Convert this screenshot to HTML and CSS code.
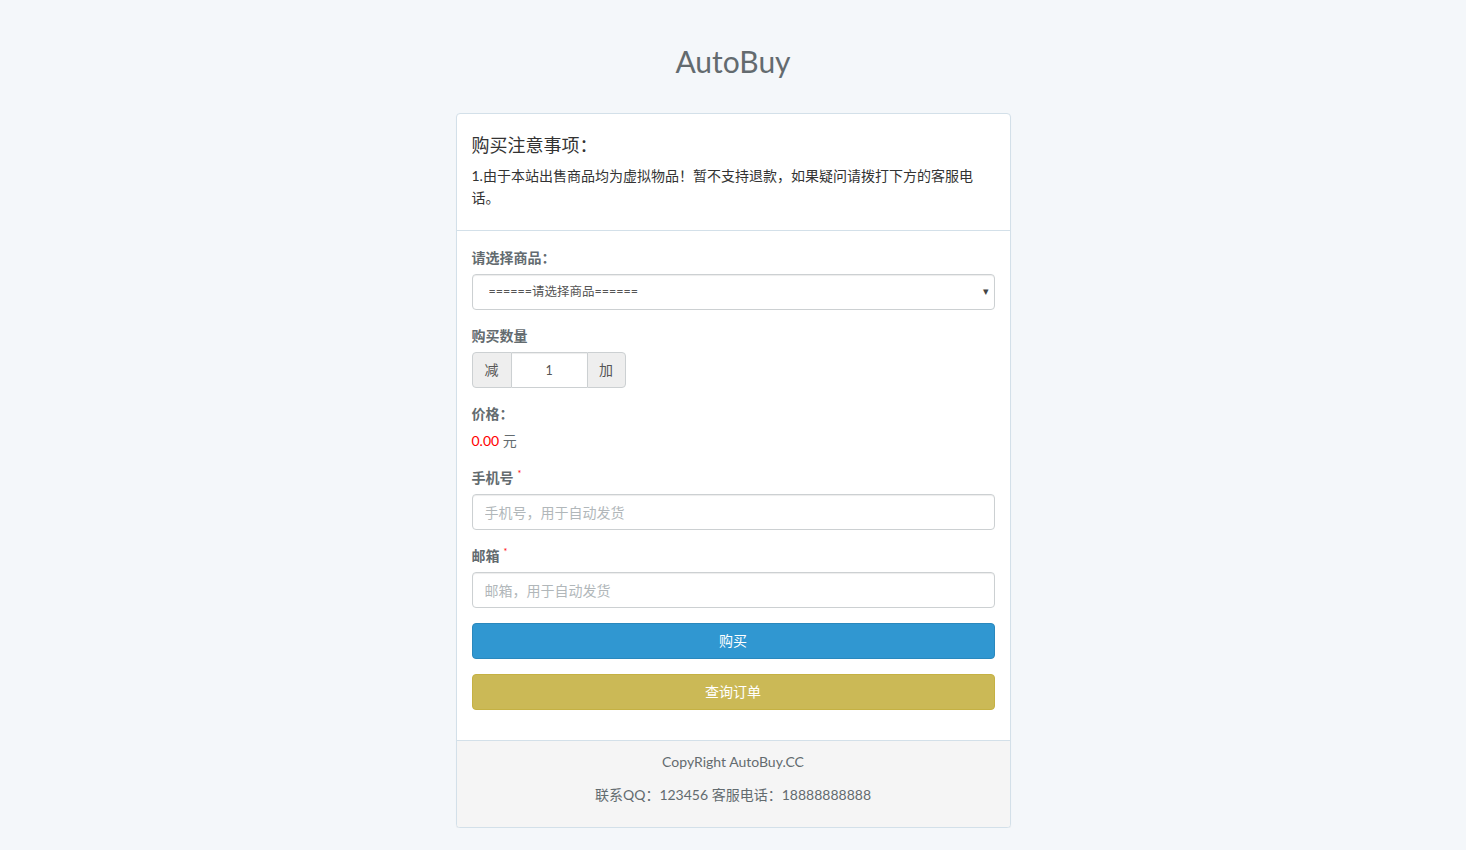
FILE: index.html
```html
<!DOCTYPE html>
<html lang="zh-CN">
<head>
<meta charset="utf-8">
<title>AutoBuy</title>
<link rel="stylesheet" href="styles.css">
</head>
<body>
<header class="site-header">
  <h1 class="site-title">AutoBuy</h1>
</header>
<main class="panel">
  <section class="notice">
    <h4 class="notice-title">购买注意事项：</h4>
    <p class="notice-text">1.由于本站出售商品均为虚拟物品！暂不支持退款，如果疑问请拨打下方的客服电话。</p>
  </section>
  <form class="panel-body">
    <div class="form-group">
      <label class="label">请选择商品：</label>
      <div class="select-wrap">
        <select class="form-control select">
          <option>======请选择商品======</option>
        </select>
        <span class="caret">&#9662;</span>
      </div>
    </div>
    <div class="form-group">
      <label class="label">购买数量</label>
      <div class="input-group">
        <span class="addon addon-left">减</span>
        <input class="qty" type="text" value="1">
        <span class="addon addon-right">加</span>
      </div>
    </div>
    <div class="form-group">
      <label class="label">价格：</label>
      <div class="price"><span class="price-num">0.00</span> 元</div>
    </div>
    <div class="form-group">
      <label class="label">手机号<sup class="req">*</sup></label>
      <input class="form-control" type="text" placeholder="手机号，用于自动发货">
    </div>
    <div class="form-group">
      <label class="label">邮箱<sup class="req">*</sup></label>
      <input class="form-control" type="text" placeholder="邮箱，用于自动发货">
    </div>
    <div class="form-group">
      <button type="button" class="btn btn-primary">购买</button>
    </div>
    <div class="form-group">
      <button type="button" class="btn btn-warning">查询订单</button>
    </div>
  </form>
  <footer class="panel-footer">
    <p>CopyRight AutoBuy.CC</p>
    <p>联系QQ：123456 客服电话：18888888888</p>
  </footer>
</main>
</body>
</html>
```
FILE: styles.css
```css
* { box-sizing: border-box; }
html, body { margin: 0; padding: 0; }
body {
  background: #f4f7fa;
  font-family: Lato, "Noto Sans CJK SC", sans-serif;
  font-size: 14px;
  line-height: 1.6;
  color: #636b6f;
}
.site-header {
  padding: 44px 0 35px;
  text-align: center;
}
.site-title {
  margin: 0;
  font-size: 30px;
  font-weight: 400;
  line-height: 34px;
  color: #636b6f;
}
.panel {
  width: 555px;
  margin: 0 auto;
  background: #fff;
  border: 1px solid #d3e0e9;
  border-radius: 4px;
  box-shadow: 0 1px 1px rgba(0,0,0,.05);
  overflow: hidden;
}
.notice {
  padding: 21px 15px 21px;
  border-bottom: 1px solid #d3e0e9;
}
.notice-title {
  margin: 0 0 10px;
  font-size: 18px;
  font-weight: 400;
  line-height: 20px;
  color: #333;
}
.notice-text {
  margin: 0;
  max-width: 505px;
  line-height: 22px;
  color: #333;
}
.panel-body {
  padding: 16px 15px 0;
}
.form-group {
  margin-bottom: 15px;
}
.label {
  display: block;
  margin-bottom: 5px;
  font-weight: 700;
  line-height: 22px;
  color: #636b6f;
}
.req {
  color: #f00;
  font-size: 9px;
  font-weight: 400;
  margin-left: 4px;
  vertical-align: 6px;
  line-height: 0;
}
.form-control {
  display: block;
  width: 100%;
  height: 36px;
  padding: 6px 12px;
  font: inherit;
  font-size: 14px;
  color: #555;
  background: #fff;
  border: 1px solid #ccd0d2;
  border-radius: 4px;
  box-shadow: inset 0 1px 1px rgba(0,0,0,.075);
  outline: none;
}
.form-control::placeholder { color: #b1b7ba; }
.select-wrap { position: relative; }
.select {
  appearance: none;
  -webkit-appearance: none;
  padding-left: 16px;
  font-size: 12.5px;
  color: #555;
}
.caret {
  position: absolute;
  right: 6px;
  top: 8px;
  font-size: 11px;
  line-height: 18px;
  color: #444;
  pointer-events: none;
}
.input-group {
  display: flex;
  width: 154px;
  height: 36px;
}
.addon {
  display: flex;
  align-items: center;
  justify-content: center;
  background: #eee;
  border: 1px solid #ccd0d2;
  color: #555;
  font-size: 14px;
}
.addon-left { width: 40px; border-radius: 4px 0 0 4px; }
.addon-right { width: 39px; border-radius: 0 4px 4px 0; }
.qty {
  width: 75px;
  height: 36px;
  border: 1px solid #ccd0d2;
  border-left: 0;
  border-right: 0;
  text-align: center;
  font: inherit;
  font-size: 12.5px;
  color: #555;
  outline: none;
  padding: 0;
  box-shadow: inset 0 1px 1px rgba(0,0,0,.075);
}
.price {
  line-height: 22px;
  color: #636b6f;
}
.price-num { color: #f00; }
.btn {
  display: block;
  width: 100%;
  height: 36px;
  border-radius: 4px;
  font: inherit;
  font-size: 14px;
  color: #fff;
  cursor: pointer;
}
.btn-primary { background: #3097d1; border: 1px solid #2a88bd; }
.btn-warning { background: #cbb956; border: 1px solid #c5b143; }
.panel-body .form-group:last-child { margin-bottom: 30px; }
.panel-footer {
  padding: 10px 15px 11px;
  background: #f5f5f5;
  border-top: 1px solid #d3e0e9;
  text-align: center;
}
.panel-footer p {
  margin: 0 0 11px;
  line-height: 22px;
}
.panel-footer p:last-child { margin-bottom: 10px; }
```
